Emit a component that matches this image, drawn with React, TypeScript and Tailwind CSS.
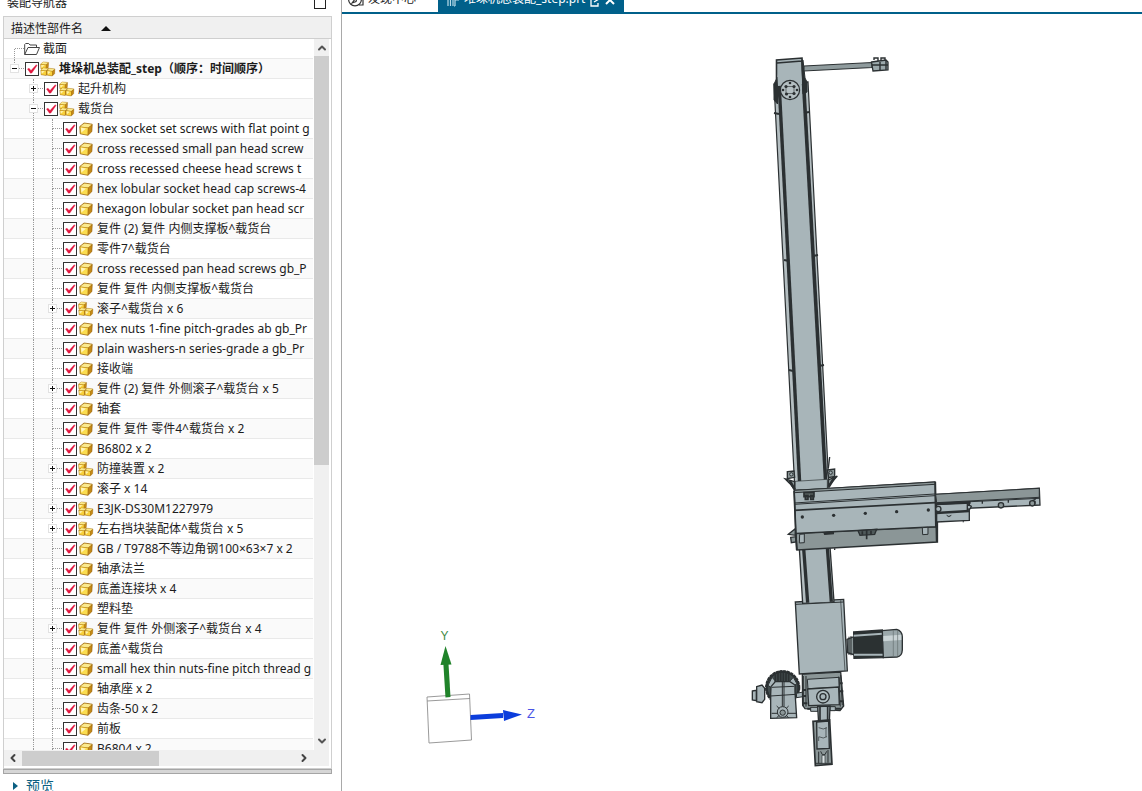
import { useState } from "react";
import { ChevronDown, ChevronLeft, ChevronRight, ChevronUp } from "lucide-react";

type Kind = "part" | "assembly";

interface TreeNode {
  name: string;
  kind: Kind;
  open?: boolean;
}

const mechanisms: TreeNode[] = [
  { name: "起升机构", kind: "assembly", open: false },
  { name: "载货台", kind: "assembly", open: true },
];

const parts: TreeNode[] = [
  { name: "hex socket set screws with flat point g", kind: "part" },
  { name: "cross recessed small pan head screw", kind: "part" },
  { name: "cross recessed cheese head screws t", kind: "part" },
  { name: "hex lobular socket head cap screws-4", kind: "part" },
  { name: "hexagon lobular socket pan head scr", kind: "part" },
  { name: "复件 (2) 复件 内侧支撑板^载货台", kind: "part" },
  { name: "零件7^载货台", kind: "part" },
  { name: "cross recessed pan head screws gb_P", kind: "part" },
  { name: "复件 复件 内侧支撑板^载货台", kind: "part" },
  { name: "滚子^载货台 x 6", kind: "assembly" },
  { name: "hex nuts 1-fine pitch-grades ab gb_Pr", kind: "part" },
  { name: "plain washers-n series-grade a gb_Pr", kind: "part" },
  { name: "接收端", kind: "part" },
  { name: "复件 (2) 复件 外侧滚子^载货台 x 5", kind: "assembly" },
  { name: "轴套", kind: "part" },
  { name: "复件 复件 零件4^载货台 x 2", kind: "part" },
  { name: "B6802 x 2", kind: "part" },
  { name: "防撞装置 x 2", kind: "assembly" },
  { name: "滚子 x 14", kind: "part" },
  { name: "E3JK-DS30M1227979", kind: "assembly" },
  { name: "左右挡块装配体^载货台 x 5", kind: "assembly" },
  { name: "GB / T9788不等边角钢100×63×7 x 2", kind: "part" },
  { name: "轴承法兰", kind: "part" },
  { name: "底盖连接块 x 4", kind: "part" },
  { name: "塑料垫", kind: "part" },
  { name: "复件 复件 外侧滚子^载货台 x 4", kind: "assembly" },
  { name: "底盖^载货台", kind: "part" },
  { name: "small hex thin nuts-fine pitch thread g", kind: "part" },
  { name: "轴承座 x 2", kind: "part" },
  { name: "齿条-50 x 2", kind: "part" },
  { name: "前板", kind: "part" },
  { name: "B6804 x 2", kind: "part" },
];

function PartIcon() {
  return (
    <svg viewBox="0 0 16 16" className="size-4 shrink-0" aria-hidden="true">
      <path d="M1.800 5.500 6 2 14.200 3.200 13.800 10.600 10 14.300 2.200 12.800Z" fill="#a86f10" stroke="#a06c10" strokeWidth=".8" strokeLinejoin="round" />
      <path d="M2.200 5.500 6.200 2.400 13.800 3.500 10.200 6.400Z" fill="#fbe98c" />
      <path d="M2.300 6 9.800 7 9.600 13.700 2.700 12.400Z" fill="#fbdd4e" />
      <path d="M10.600 6.800 13.700 4.200 13.300 10.400 10.300 13.400Z" fill="#c58a16" />
      <path d="M3 6.800 8 7.500 3.400 11.500Z" fill="#fff6c0" />
    </svg>
  );
}

function SmallCube({ x, y }: { x: number; y: number }) {
  return (
    <g transform={`translate(${x} ${y})`}>
      <path d="M.3 2.500 2.900.3 8.300.9 8 5.700 5.700 8 .6 7.200Z" fill="#b07c14" stroke="#a9741a" strokeWidth=".4" strokeLinejoin="round" />
      <path d="M.6 2.300 2.900.5 7.900 1.100 5.700 2.900Z" fill="#fbe98c" />
      <path d="M.6 2.900 5.500 3.400 5.400 7.500.9 6.900Z" fill="#f9d23c" />
      <path d="M1 3.300 4.300 3.700 1.200 6.200Z" fill="#fff2b0" />
      <path d="M6.100 3.400 7.900 1.800 7.600 5.500 5.900 7.200Z" fill="#c58a16" />
    </g>
  );
}

function AssemblyIcon() {
  return (
    <svg viewBox="0 0 16 16" className="size-4 shrink-0" aria-hidden="true">
      <SmallCube x={0.3} y={0.6} />
      <SmallCube x={0.5} y={6.6} />
      <SmallCube x={6.6} y={7} />
    </svg>
  );
}

function Expander({ open, name }: { open: boolean; name: string }) {
  return (
    <button
      type="button"
      aria-label={name}
      aria-expanded={open}
      className="z-10 col-start-1 row-start-1 grid size-[9px] place-items-center place-self-center border border-[#e2e2e2] bg-white"
    >
      <svg viewBox="0 0 5 5" className="size-[5px]" shapeRendering="crispEdges" aria-hidden="true">
        <path d="M0 2h5v1H0Z" fill="#111" />
        {!open && <path d="M2 0h1v5H2Z" fill="#111" />}
      </svg>
    </button>
  );
}

function Guide({ top = true, bottom = true }: { top?: boolean; bottom?: boolean }) {
  return (
    <span className="col-start-1 row-start-1 ml-[9px] grid h-full grid-rows-2">
      <span className={top ? "border-l border-dotted border-[#9a9a9a]" : ""} />
      <span className={bottom ? "border-l border-dotted border-[#9a9a9a]" : ""} />
    </span>
  );
}

function Branch({ top, bottom, children }: { top?: boolean; bottom?: boolean; children?: React.ReactNode }) {
  return (
    <span className="grid h-full w-[19px] shrink-0 grid-cols-1">
      <Guide top={top} bottom={bottom} />
      <span className="col-start-1 row-start-1 ml-[10px] self-center border-t border-dotted border-[#9a9a9a]" />
      {children}
    </span>
  );
}

function Blank({ line = false }: { line?: boolean }) {
  return <span className="grid h-full w-[19px] shrink-0 grid-cols-1">{line && <Guide />}</span>;
}

function CheckedItem({ node, bold = false }: { node: TreeNode; bold?: boolean }) {
  const [checked, setChecked] = useState(true);
  return (
    <label className="ml-px flex items-center whitespace-nowrap">
      <span className="mr-px grid size-[14px] shrink-0">
        <input
          type="checkbox"
          checked={checked}
          onChange={() => setChecked(!checked)}
          className="col-start-1 row-start-1 size-[14px] appearance-none border border-[#333] bg-white"
        />
        {checked && (
          <svg viewBox="0 0 14 14" className="pointer-events-none col-start-1 row-start-1" aria-hidden="true">
            <path d="M2.500 7 5.500 11.200 6.800 11 12 3.500 11.300 2.700 6 8.600 4 6.200Z" fill="#e0143c" stroke="#e0143c" strokeWidth=".4" />
          </svg>
        )}
      </span>
      {node.kind === "part" ? <PartIcon /> : <AssemblyIcon />}
      <span className={bold ? "ml-[3px] font-bold" : "ml-[3px]"}>{node.name}</span>
    </label>
  );
}

const row = "flex h-5 items-center border-b border-[#e9e9e9] pl-px even:bg-[#fafafa]";

function Tree() {
  return (
    <ul className="min-w-0 flex-1 overflow-hidden">
      <li className={row}>
        <Branch top={false} />
        <svg viewBox="0 0 16 16" className="size-4 shrink-0" fill="none" stroke="#444" aria-hidden="true">
          <path d="M.7 13.5V3.5l1-1h3l1.3 1.500h6.500v2.500M.7 13.500 4 6.500h11.500l-3 7Z" />
        </svg>
        <span className="ml-[3px]">截面</span>
      </li>
      <li className={row}>
        <Branch bottom={false}>
          <Expander open name="堆垛机总装配_step" />
        </Branch>
        <CheckedItem node={{ name: "堆垛机总装配_step（顺序：时间顺序）", kind: "assembly" }} bold />
      </li>
      {mechanisms.map((node) => (
        <li key={node.name} className={row}>
          <Blank />
          <Branch>
            <Expander open={!!node.open} name={node.name} />
          </Branch>
          <CheckedItem node={node} />
        </li>
      ))}
      {parts.map((node) => (
        <li key={node.name} className={row}>
          <Blank />
          <Blank line />
          <Branch>{node.kind === "assembly" && <Expander open={false} name={node.name} />}</Branch>
          <CheckedItem node={node} />
        </li>
      ))}
    </ul>
  );
}

function Navigator() {
  return (
    <aside className="flex w-[342px] shrink-0 flex-col border-r border-[#a9a9a9] pr-[9px] pl-[3px]">
      <header className="flex h-4 shrink-0 items-end justify-between overflow-hidden pr-1.5 pl-1">
        <h2 className="pb-[5px] leading-4">装配导航器</h2>
        <button type="button" aria-label="固定" className="mb-[7px] h-4 w-3 border border-[#222] bg-white" />
      </header>
      <section className="flex min-h-0 flex-1 flex-col border border-[#cfcfcf]">
        <button
          type="button"
          className="flex h-[22px] shrink-0 items-center gap-[18px] border-b border-[#cfcfcf] bg-[#f0f0f0] px-[7px] pt-0.5 text-left"
        >
          描述性部件名
          <svg viewBox="0 0 10 5" className="h-[5px] w-2.5" aria-hidden="true">
            <path d="M0 5 5 0 10 5Z" fill="#111" />
          </svg>
        </button>
        <div className="flex min-h-0 flex-1 pr-0.5">
          <Tree />
          <div className="ml-px flex w-[15px] shrink-0 flex-col bg-[#f0f0f0]">
            <button type="button" aria-label="向上滚动" className="grid h-[17px] place-items-center">
              <ChevronUp size={12} strokeWidth={4} color="#555" />
            </button>
            <div className="h-[409px] bg-[#cdcdcd]" />
            <button type="button" aria-label="向下滚动" className="mt-auto grid h-[18px] place-items-center">
              <ChevronDown size={12} strokeWidth={4} color="#555" />
            </button>
          </div>
        </div>
        <div className="mr-0.5 mb-0.5 flex h-4 shrink-0 items-center bg-[#f0f0f0] pr-4">
          <button type="button" aria-label="向左滚动" className="grid w-[18px] place-items-center">
            <ChevronLeft size={12} strokeWidth={4} color="#444" />
          </button>
          <div className="h-[15px] w-[137px] bg-[#cdcdcd]" />
          <button type="button" aria-label="向右滚动" className="ml-auto grid w-[18px] place-items-center">
            <ChevronRight size={12} strokeWidth={4} color="#444" />
          </button>
        </div>
      </section>
      <div className="h-[5px] shrink-0 border border-[#a5a5a5] bg-[#d6d6d6]" />
      <button
        type="button"
        className="flex h-[17px] shrink-0 items-start gap-2 overflow-hidden pt-0.5 pl-2.5 text-sm leading-5 text-[#0b5f82]"
      >
        <svg viewBox="0 0 5 8" className="mt-1.5 h-2 w-[5px]" aria-hidden="true">
          <path d="M0 0 5 4 0 8Z" fill="#0b5f82" />
        </svg>
        预览
      </button>
    </aside>
  );
}

function TabBar() {
  return (
    <nav className="flex h-[14px] shrink-0 items-end overflow-hidden border-b-2 border-[#00608a]">
      <a href="#discovery" className="flex w-[96px] items-end gap-1 pb-[5px] pl-1.5 text-[#222]">
        <svg viewBox="0 0 16 16" className="size-4" fill="none" stroke="#333" strokeWidth="1.2" aria-hidden="true">
          <circle cx="7" cy="8.5" r="6.4" />
          <path d="M4 12 9.5 5 8 10.5ZM11.5 6H15v8h-4" />
        </svg>
        <span className="leading-4">发现中心</span>
      </a>
      <div className="flex w-[186px] items-end gap-1 bg-[#00608a] pb-[5px] pl-1.5 text-white">
        <svg viewBox="0 0 16 16" className="size-4" fill="none" stroke="#b9dcea" strokeWidth="1.2" aria-hidden="true">
          <path d="M1 8h3v7M6.500 15V6H9v9M11 15V9h4M11 15h-1" />
        </svg>
        <a href="#assembly" className="leading-4">堆垛机总装配_step.prt</a>
        <svg viewBox="0 0 12 12" className="size-3" fill="none" stroke="#fff" strokeWidth="1.3" aria-hidden="true">
          <path d="M5 3H2v8h7V8M5 7l5-3" />
        </svg>
        <button type="button" aria-label="关闭" className="pb-0.5">
          <svg viewBox="0 0 10 10" className="size-2.5" stroke="#fff" strokeWidth="2" aria-hidden="true">
            <path d="m1 1 8 8M9 1 1 9" />
          </svg>
        </button>
      </div>
    </nav>
  );
}

const STEEL = "#a8b5b9";
const SHADE = "#8b9697";
const INK = "#2b3032";

function Column() {
  return (
    <g>
      <path d="M774 84 808 82 829 488 795 492Z" fill="#b4bec1" stroke={INK} strokeWidth="1.2" />
      <path d="M778 62 802 60 826 488 799 490Z" fill={STEEL} />
      <path d="M779 82 800 490" stroke={INK} strokeWidth="3.4" />
      <path d="M803.500 82 826 488" stroke={INK} strokeWidth="3.6" />
      <path d="M774 84 777.500 77V104L774 100ZM801 60l2 0 2 18 2 4v10l-4 2Z" fill={INK} stroke={INK} />
      <path d="M776 60 801 58 802 84 778 86Z" fill={STEEL} />
      <path d="M776.500 84V60L802 58l1 26M777 63l25-2" fill="none" stroke={INK} strokeWidth="1.600" />
      <path d="M774 113l5 1M804 113l5-1M784 260l5 1M813 256l5-1M789 370l4 1M819 366l5-1" stroke={INK} strokeWidth="2" />
      <circle cx="790" cy="90" r="9.600" fill="#b4bfc2" stroke={INK} strokeWidth="1.200" />
      <path d="M786 86.500h8v7h-8Z" fill="none" stroke={INK} strokeWidth=".6" />
      <g fill={INK}>
        <circle cx="786" cy="86.500" r="1.600" />
        <circle cx="794" cy="86.500" r="1.600" />
        <circle cx="786.500" cy="94" r="1.600" />
        <circle cx="794" cy="93.500" r="1.600" />
        <circle cx="790" cy="83" r="1.300" />
        <circle cx="790" cy="97" r="1.300" />
        <circle cx="783" cy="90" r="1.300" />
        <circle cx="797" cy="90" r="1.300" />
      </g>
      <path d="M804 66 872 62.500V67.500L804 71Z" fill="#8f9b9d" stroke={INK} strokeWidth="1.100" />
      <path d="M871.500 62 886 60l2 2v8l-15 1Z" fill="#9ba8ab" stroke={INK} strokeWidth="1.300" />
      <path d="M880 62v8M886 61v9M874 60v-2h4v3M881 60v-2h4v3M872 65h16" fill="none" stroke={INK} strokeWidth="1.400" />
    </g>
  );
}

function Carriage() {
  return (
    <g transform="translate(750 440) scale(.3333)" stroke={INK} strokeWidth="4">
      <path d="M148 325 240 320 252 485 158 490Z" fill="#b4bec1" />
      <path d="M166 325 227 322 240 485 178 488Z" fill={STEEL} stroke="none" />
      <path d="M161 325 173 488M232 322 244 485" strokeWidth="10" />
      <path d="M135 150V124L232 118V146Z" fill={STEEL} strokeWidth="2" />
      <path d="M112 95 132 93 134 112 112 116ZM106 117l28 8v24l-14-18ZM232 90l22-3v22l-18 4ZM262 108l-27 30v-18ZM235 85l4-34" fill={SHADE} />
      <path d="M119 122l15 26M236 140l18-28" strokeWidth="8" />
      <circle cx="124" cy="103" r="5" fill={STEEL} strokeWidth="3" />
      <circle cx="242" cy="98" r="5" fill={STEEL} strokeWidth="3" />
      <path d="M115 283l21-17v20ZM122 292l16-2v16l-14 2Z" fill={SHADE} />
      <path d="M137 280 557 260V245H562V306L141 330Z" fill={SHADE} strokeWidth="5" />
      <path d="M133 152 555 126 557 260 137 280Z" fill={STEEL} />
      <path d="M133 151 555 126V133L134 158Z" fill={SHADE} strokeWidth="3" />
      <path d="M133 189 555 162M133 193 555 167" strokeWidth="3" />
      <path d="M132 211 556 188" strokeWidth="5" />
      <path d="M132 152 140 330M556 125 560 306" strokeWidth="5" />
      <path d="M162 158h30v12h-30ZM166 166h8v12h-8ZM182 166h8v12h-8Z" fill="#66706f" strokeWidth="5" />
      <g stroke="none" fill={INK}>
        <circle cx="157" cy="231" r="5" />
        <circle cx="251" cy="226" r="5" />
        <circle cx="346" cy="220" r="5" />
        <circle cx="440" cy="215" r="5" />
        <circle cx="535" cy="210" r="5" />
      </g>
      <path d="M149 283 163 282V308L148 309ZM517 263 534 262V283L518 284Z" fill={STEEL} strokeWidth="3" />
      <path d="M222 278l28-2v5l-26 2Z" fill={INK} />
      <path d="M324 272 380 268 374 283 330 286Z" fill="#4f595a" />
      <path d="M350 270v28M337 274v10M363 272v10" strokeWidth="5" />
      <path d="M557 163 868 145 870 195 560 209Z" fill={STEEL} />
      <path d="M557 163 868 145V172L560 188Z" fill={SHADE} strokeWidth="3" />
      <path d="M560 190 868 175" strokeWidth="3" />
      <path d="M560 193 658 188V241L560 246Z" fill={STEEL} />
      <path d="M559 192 662 187M559 219 657 213" strokeWidth="8" />
      <circle cx="565" cy="207" r="8" fill={STEEL} />
      <circle cx="753" cy="196" r="8" fill={SHADE} />
      <circle cx="847" cy="190" r="8" fill={SHADE} />
      <path d="M652 192l12 7-3 7-9 2Z" fill={STEEL} />
      <path d="M697 183v8M775 180v8M847 182l10-4M855 183v8M640 244v3M254 325v5" />
      <path d="M590 226q6 8 14 0" fill={SHADE} strokeWidth="3" />
    </g>
  );
}

function Base() {
  const fins = [106, 114, 122, 130, 138, 146];
  return (
    <g transform="translate(740 590) scale(.3333)" stroke={INK} strokeWidth="4">
      <circle cx="128" cy="293" r="48" fill="#414b4c" strokeWidth="6" />
      <circle cx="128" cy="293" r="49" fill="none" strokeWidth="8" strokeDasharray="9 2" />
      <path d="M84 286 96 262 108 275 96 295ZM148 275 160 262 170 280 162 290Z" fill={STEEL} strokeWidth="3" />
      <path d="M93 290 106 275H150L165 285V305L170 383 92 385V315Z" fill={STEEL} />
      <path d="M92 318 168 313M127 275V350M132 275V350M95 292 163 289M95 370H168" strokeWidth="3" />
      {fins.map((x) => (
        <path key={x} d={`M${x} 248V276`} strokeWidth="5" />
      ))}
      <circle cx="128" cy="366" r="16" fill={STEEL} strokeWidth="3" />
      <circle cx="128" cy="368" r="8" fill={SHADE} strokeWidth="3" />
      <path d="M110 348 118 356M146 348 138 356M110 383 118 376M146 383 138 376" strokeWidth="3" />
      <path d="M50 290 66 285 74 295V328L66 338 50 335ZM37 303 49 301V332L37 330Z" fill={STEEL} />
      <path d="M169 310 190 306V320L170 323Z" fill={STEEL} strokeWidth="3" />

      <path d="M187 252 302 246 311 348 300 362 195 356 188 346Z" fill={SHADE} strokeWidth="4" />
      <path d="M202 268 298 262V292L204 296Z" fill={STEEL} strokeWidth="3" />
      <path d="M203 297 296 291 298 344 206 347Z" fill={STEEL} />
      <path d="M190 258V350M198 258V350M302 255 307 346M296 260 301 350" strokeWidth="3" />
      <path d="M188 300h10M188 318h10M190 340h12M299 280h9M300 304h10M300 334h10M202 356h30M268 356h36" strokeWidth="6" />
      <path d="M212 352h22v12h-22ZM270 350h16v12h-16Z" fill={STEEL} strokeWidth="3" />
      <circle cx="249" cy="320" r="19" fill="#b1bec1" />
      <circle cx="249" cy="320" r="9" fill={STEEL} />

      <path d="M166 36 311 28 322 243 178 252Z" fill={STEEL} />
      <path d="M167 43 311 36" strokeWidth="3" />
      <path d="M302 31 315 243" strokeWidth="2" />

      <path d="M321 148 342 140 344 195 323 188Z" fill={SHADE} />
      <path d="M341 126 427 120 430 203 342 205Z" fill="#2b3132" />
      <path d="M341 137 427 131M342 194 430 194" stroke="#a8b5b9" strokeWidth="6" />
      <path d="M327 140v55M333 138v58" strokeWidth="3" />
      <path d="M427 122 470 118Q486 122 487 140V180Q486 199 471 201L430 203Z" fill="#9aa7aa" />
      <path d="M430 138 484 134V150L430 154Z" fill="#c9d3d5" stroke="none" />
      <path d="M460 120V201M473 120V200" stroke="#65706f" strokeWidth="2" />

      <path d="M233 350 270 348 268 400 236 400Z" fill={STEEL} />
      <path d="M240 350V395M263 350V395" strokeWidth="5" />
      <path d="M219 394 269 390 276 523 226 527Z" fill={SHADE} strokeWidth="5" />
      <path d="M230 396 266 393 268 475 231 477Z" fill={STEEL} />
      <path d="M236 413q15 8 25 0M236 440q15 8 25 0M258 413v28M236 441v12" fill="none" strokeWidth="2" />
      <path d="M236 485v35M264 480v38M242 484l5 10h8l5-10M228 520h46" fill="none" strokeWidth="3" />
      <path d="M246 496h9v24h-9Z" fill="#d8dfe0" strokeWidth="2" />
    </g>
  );
}

function Triad() {
  return (
    <g>
      <path d="M427 697 469.500 694 471.500 740 429 743ZM427 701 470 698.500" fill="#fff" stroke="#8e8e8e" strokeWidth=".9" />
      <path d="M443.400 664 445.500 697.500 450.500 697 448.500 663.500Z" fill="#20832a" />
      <path d="M445.500 646 440.500 665 451.500 664.500Z" fill="#20832a" />
      <path d="M470.500 715 503 713V718L470.500 720Z" fill="#0b3ddc" />
      <path d="M503 710 522 714.500 504 721Z" fill="#0b3ddc" />
      <text x="440.500" y="640" fontSize="12" fill="#3f8a45">Y</text>
      <text x="527" y="718" fontSize="13" fill="#4b55e6">Z</text>
    </g>
  );
}

function Viewport() {
  return (
    <svg
      viewBox="342 14 800 777"
      className="min-h-0 w-full flex-1 font-['Liberation_Sans',sans-serif]"
      role="img"
      aria-label="堆垛机总装配"
    >
      <Column />
      <Base />
      <Carriage />
      <Triad />
    </svg>
  );
}

export default function App() {
  return (
    <div className="flex h-screen overflow-hidden bg-white font-['Noto_Sans','Noto_Sans_CJK_SC',sans-serif] text-xs text-[#1c1c1c]">
      <Navigator />
      <main className="flex min-w-0 flex-1 flex-col">
        <TabBar />
        <Viewport />
      </main>
    </div>
  );
}
